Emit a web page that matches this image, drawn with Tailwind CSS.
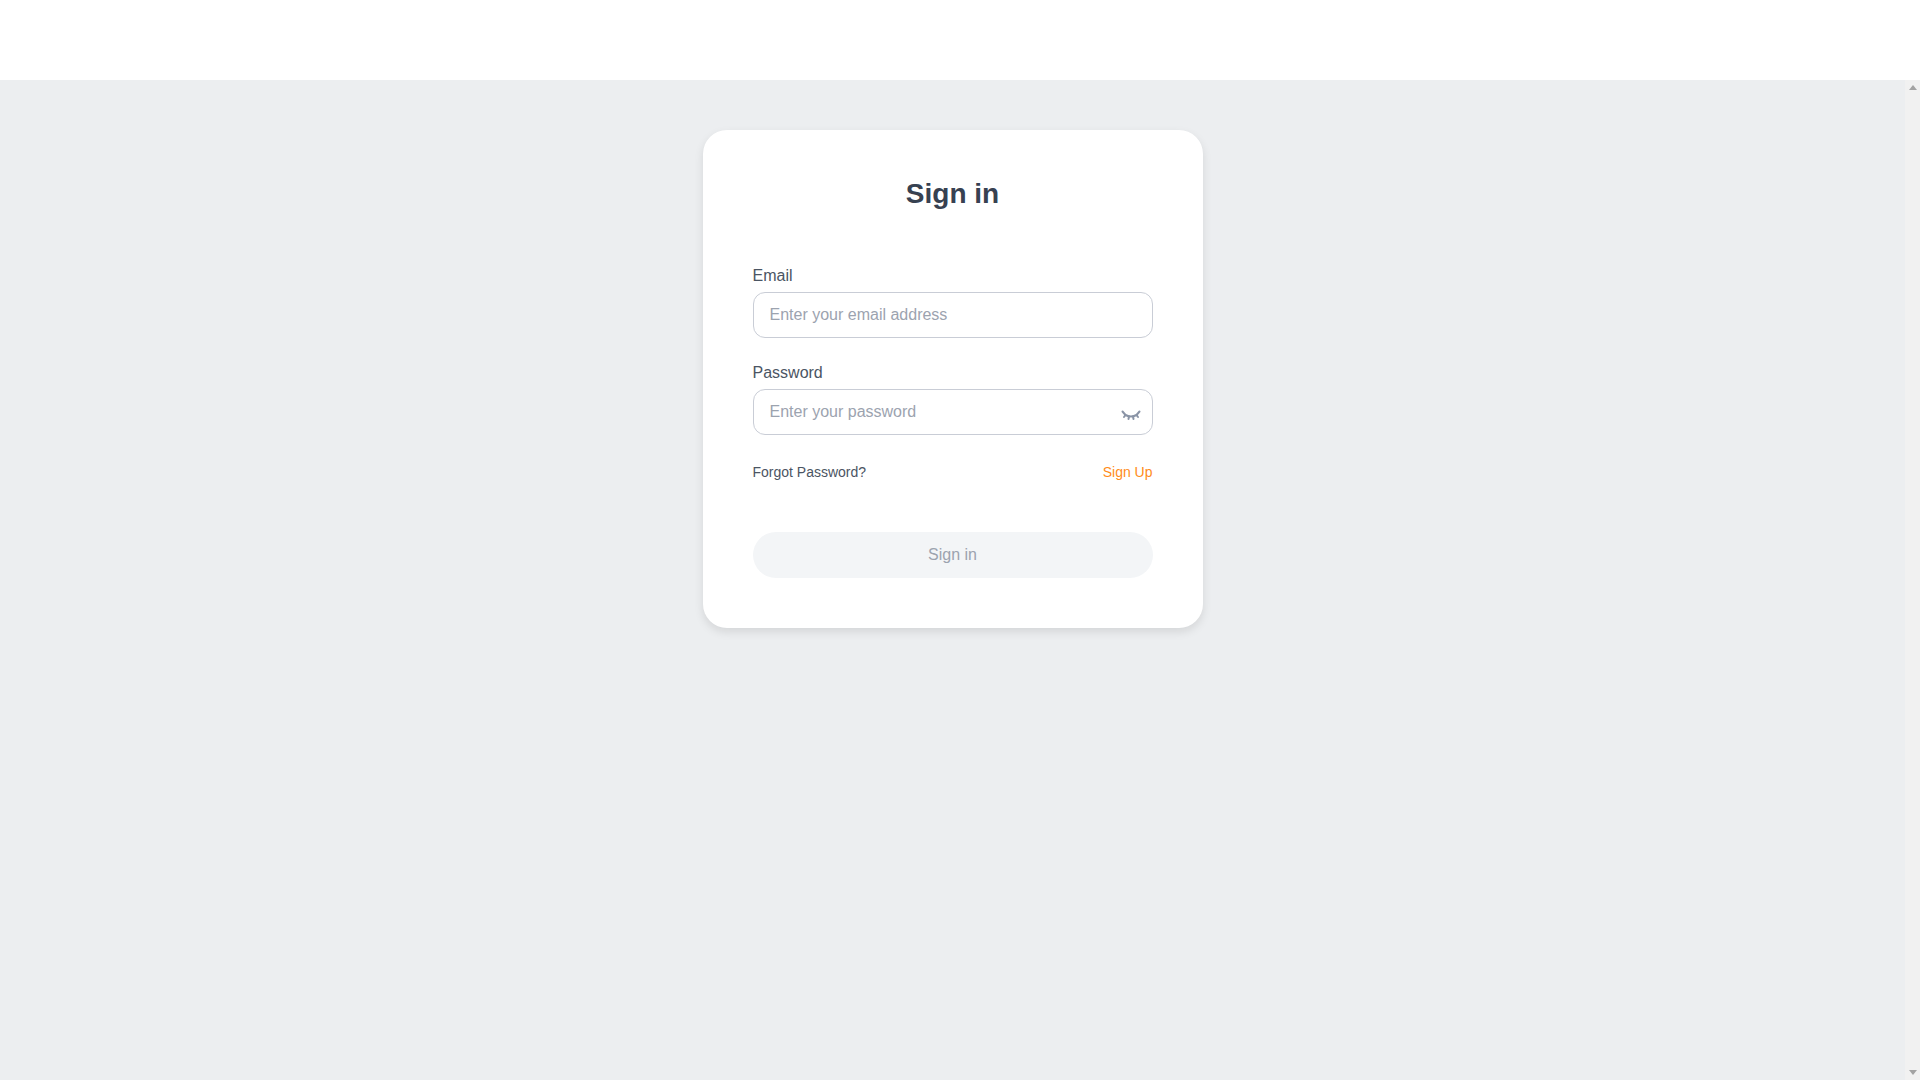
<!DOCTYPE html>
<html lang="en">
<head>
    <meta charset="UTF-8">
    <meta name="viewport" content="width=device-width, initial-scale=1.0">
    <title>Sign in</title>
    <script src="https://cdn.jsdelivr.net/npm/@tailwindcss/browser@4"></script>
</head>
<body class="h-screen overflow-hidden flex flex-col bg-white font-['Liberation_Sans',Arial,sans-serif]">
    <!-- empty top bar -->
    <header class="h-20 shrink-0 bg-white"></header>

    <div class="flex flex-1 min-h-0">
        <main class="flex-1 bg-[#eceef0] pt-[50px] flex justify-center items-start">
            <div class="w-[500px] p-[50px] bg-white rounded-3xl shadow-[0_4px_10px_rgba(0,0,0,0.1)]">
                <h1 class="text-[28px] leading-7 font-bold text-center text-[#374151] mb-[59px]">Sign in</h1>

                <form>
                    <div class="mb-[26px]">
                        <label for="email" class="block text-base leading-[18px] text-[#4b5563] mb-[7px]">Email</label>
                        <input id="email" type="email" placeholder="Enter your email address"
                               class="block w-full h-[46px] px-4 text-base bg-white border border-[#c9cdd6] rounded-xl outline-none placeholder:text-[#9ca3af]">
                    </div>

                    <div class="mb-[29px]">
                        <label for="password" class="block text-base leading-[18px] text-[#4b5563] mb-[7px]">Password</label>
                        <div class="relative">
                            <input id="password" type="password" placeholder="Enter your password"
                                   class="block w-full h-[46px] px-4 text-base bg-white border border-[#c9cdd6] rounded-xl outline-none placeholder:text-[#9ca3af]">
                            <svg class="absolute right-[12px] top-[21px] w-5 h-[11px]" viewBox="0 0 20 11" fill="none" stroke="#8a94a6" stroke-width="2" stroke-linecap="round" stroke-linejoin="round">
                                <path d="M1.500 1.500 4.500 5Q10 8 15.500 5L18.500 1.500"/>
                                <path d="M4.500 5 3 7M8 6.500 7.500 9M12 6.500 12.500 9M15.500 5 17 7"/>
                            </svg>
                        </div>
                    </div>

                    <div class="flex justify-between items-center text-sm leading-4 mb-[52px]">
                        <a href="#" class="text-[#4b5563]">Forgot Password?</a>
                        <a href="#" class="text-[#ff8c1a]">Sign Up</a>
                    </div>

                    <button type="button" disabled class="block w-full h-[46px] rounded-full bg-[#f3f5f7] text-base text-[#9ca3af]">Sign in</button>
                </form>
            </div>
        </main>

        <!-- scrollbar -->
        <aside class="w-[15px] shrink-0 bg-[#f1f1f1] flex flex-col justify-between items-center py-[5px]">
            <svg class="w-[8px] h-[5px]" viewBox="0 0 8 5"><path d="M4 0 8 5H0z" fill="#a3a3a3"/></svg>
            <svg class="w-[8px] h-[5px]" viewBox="0 0 8 5"><path d="M0 0h8L4 5z" fill="#a3a3a3"/></svg>
        </aside>
    </div>
</body>
</html>
